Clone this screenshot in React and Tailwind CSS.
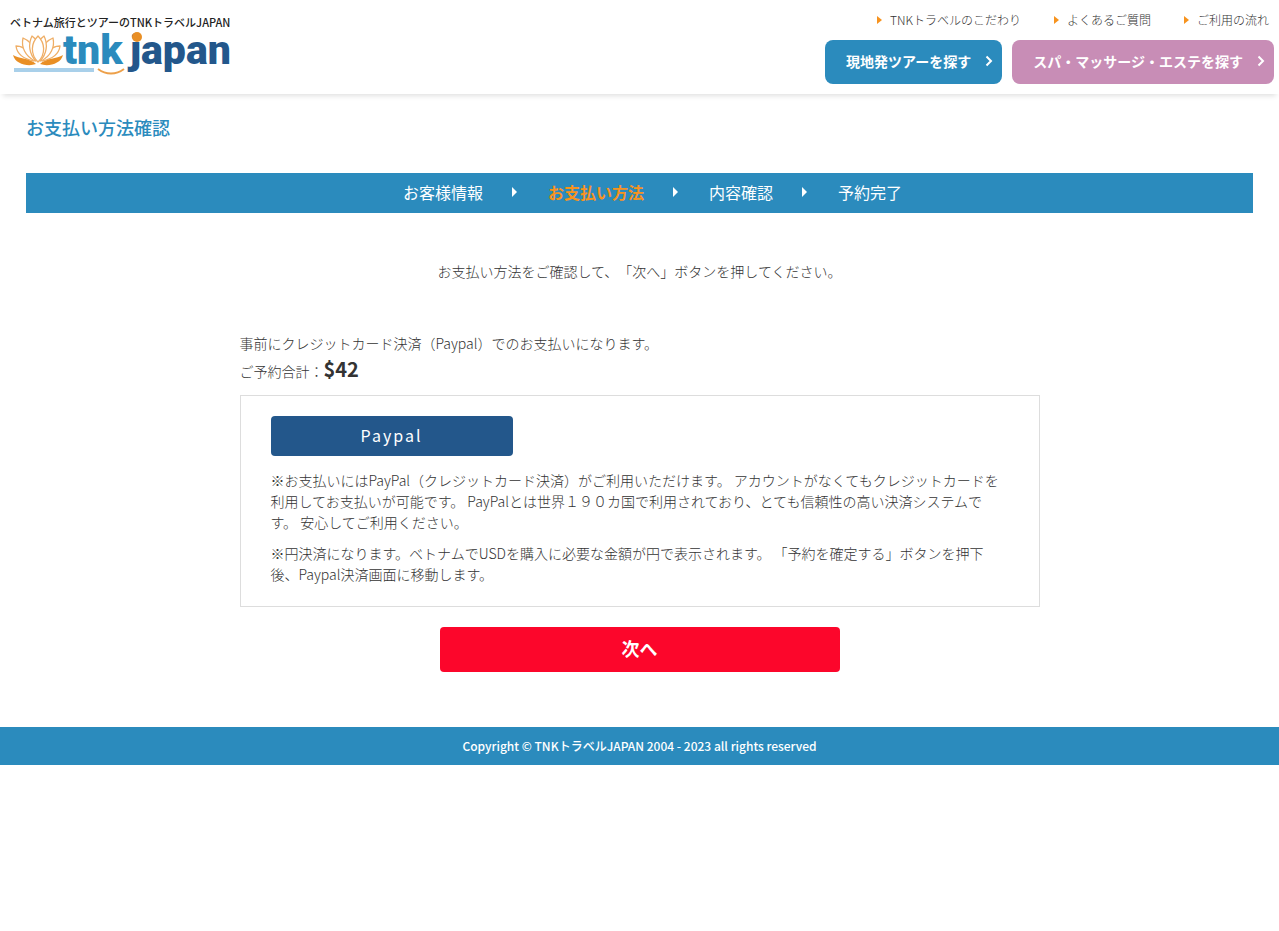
const navLinks = ["TNKトラベルのこだわり", "よくあるご質問", "ご利用の流れ"]

const steps = ["お客様情報", "お支払い方法", "内容確認", "予約完了"]
const currentStep = 1

function Triangle({ className }) {
  return (
    <svg viewBox="0 0 5 10" preserveAspectRatio="none" aria-hidden="true" className={className}>
      <path d="M0 0L5 5L0 10Z" fill="currentColor" />
    </svg>
  )
}

function Chevron() {
  return (
    <svg viewBox="0 0 8 12" aria-hidden="true" className="h-3 w-2">
      <path d="M1.5 1.5L6 6L1.5 10.5" fill="none" stroke="currentColor" strokeWidth="2" />
    </svg>
  )
}

function Logo() {
  return (
    <svg viewBox="0 0 222 46" role="img" aria-label="tnk japan" className="block h-[46px] w-[222px] overflow-visible">
      <g fill="#fff" stroke="#efae66" strokeWidth="1.3" strokeLinejoin="round">
        <path d="M24 31C14 29 7 24 6 16C11 16 15 18 18 22" />
        <path d="M32 31C42 29 49 24 50 16C45 16 41 18 38 22" />
        <path d="M25 31C15 26 11 17 13 8C18 10 22 14 24 20Z" />
        <path d="M31 31C41 26 45 17 43 8C38 10 34 14 32 20Z" />
        <path d="M26 31C19 24 18 14 22 6C25 8 27 11 28 14Z" />
        <path d="M30 31C37 24 38 14 34 6C31 8 29 11 28 14Z" />
        <path d="M28 32C20 24 21 13 28 6C35 13 36 24 28 32Z" />
      </g>
      <path d="M3 25C9 29 20 28 26 34C18 37 5 34 3 25Z" fill="#e98f25" />
      <path d="M53 25C47 29 36 28 30 34C38 37 51 34 53 25Z" fill="#e98f25" />
      <rect x="4" y="38" width="80" height="4" fill="#a9d0ea" />
      <path d="M88 39C96 45 106 45 114 39" fill="none" stroke="#eda04a" strokeWidth="2" />
      <g className="font-[Roboto,sans-serif] font-black" fontSize="41">
        <text x="53" y="34" fill="#2b8bbd">tnk</text>
        <text x="120" y="34" fill="#23578b">japan</text>
      </g>
      <circle cx="127" cy="7" r="5" fill="#e98f25" />
    </svg>
  )
}

function Header() {
  return (
    <header className="flex items-start justify-between pr-[5px] pb-2.5 shadow-[0_5px_5px_-3px_rgba(0,0,0,0.12)]">
      <div className="pt-3.5 pl-2.5">
        <p className="text-[11px] leading-4 font-medium text-[#222]">ベトナム旅行とツアーのTNKトラベルJAPAN</p>
        <a href="#" className="block">
          <Logo />
        </a>
      </div>
      <div className="flex flex-col items-end">
        <nav className="flex h-10 items-center gap-[33px] pr-[5px]">
          {navLinks.map((link) => (
            <a key={link} href="#" className="flex items-center gap-2 text-xs font-light">
              <Triangle className="h-2 w-[5px] text-[#f7931e]" />
              {link}
            </a>
          ))}
        </nav>
        <div className="flex gap-2.5 text-sm font-bold text-white">
          <a href="#" className="flex h-11 items-center gap-3.5 rounded-lg bg-[#2b8bbd] pr-[9px] pb-0.5 pl-[21px]">
            現地発ツアーを探す
            <Chevron />
          </a>
          <a href="#" className="flex h-11 items-center gap-3.5 rounded-lg bg-[#c88db6] pr-[9px] pb-0.5 pl-[21px]">
            スパ・マッサージ・エステを探す
            <Chevron />
          </a>
        </div>
      </div>
    </header>
  )
}

function Steps() {
  return (
    <ol className="mt-8 flex h-10 items-center justify-center bg-[#2b8bbd] pb-0.5 pl-[26px] text-base text-white">
      {steps.map((step, i) => (
        <li key={step} className="flex items-center">
          {i > 0 && <Triangle className="mr-[31px] ml-[29px] h-2.5 w-[5px]" />}
          <span className={i === currentStep ? "font-bold text-[#f7931e]" : ""}>{step}</span>
        </li>
      ))}
    </ol>
  )
}

function App() {
  return (
    <div className="bg-white font-['Noto_Sans_CJK_JP',sans-serif] text-sm text-[#333] [text-spacing-trim:space-all]">
      <Header />
      <main className="px-[26px] pt-[19px]">
        <h1 className="text-lg leading-7 font-medium text-[#2b8bbd]">お支払い方法確認</h1>
        <Steps />
        <p className="mt-[46px] text-center leading-6 font-light">
          お支払い方法をご確認して、「次へ」ボタンを押してください。
        </p>
        <form className="mx-auto mt-[50px] max-w-[800px]" onSubmit={(e) => e.preventDefault()}>
          <div className="font-light">
            <p className="leading-[21px]">事前にクレジットカード決済（Paypal）でのお支払いになります。</p>
            <p className="leading-[30px]">
              ご予約合計：<strong className="text-xl leading-[30px] font-bold">$42</strong>
            </p>
          </div>
          <section className="mt-[9px] border border-[#ddd] px-[30px] pt-5 pb-[21px]">
            <button
              type="button"
              className="block h-10 w-[242px] rounded bg-[#23578b] pb-0.5 text-base tracking-[2px] text-white"
            >
              Paypal
            </button>
            <p className="mt-3.5 leading-[21px] font-light">
              ※お支払いにはPayPal（クレジットカード決済）がご利用いただけます。
              アカウントがなくてもクレジットカードを利用してお支払いが可能です。
              PayPalとは世界１９０カ国で利用されており、とても信頼性の高い決済システムです。
              安心してご利用ください。
            </p>
            <p className="mt-2.5 leading-[21px] font-light">
              ※円決済になります。ベトナムでUSDを購入に必要な金額が円で表示されます。
              「予約を確定する」ボタンを押下後、Paypal決済画面に移動します。
            </p>
          </section>
          <button
            type="submit"
            className="mx-auto mt-5 block h-[45px] w-full max-w-[400px] rounded bg-[#fc062b] pb-1 text-lg font-bold text-white"
          >
            次へ
          </button>
        </form>
      </main>
      <footer className="mt-[55px] flex h-[38px] items-center justify-center bg-[#2b8bbd] text-xs font-medium text-white">
        <small className="text-xs">Copyright © TNKトラベルJAPAN 2004 - 2023 all rights reserved</small>
      </footer>
    </div>
  )
}

export default App
